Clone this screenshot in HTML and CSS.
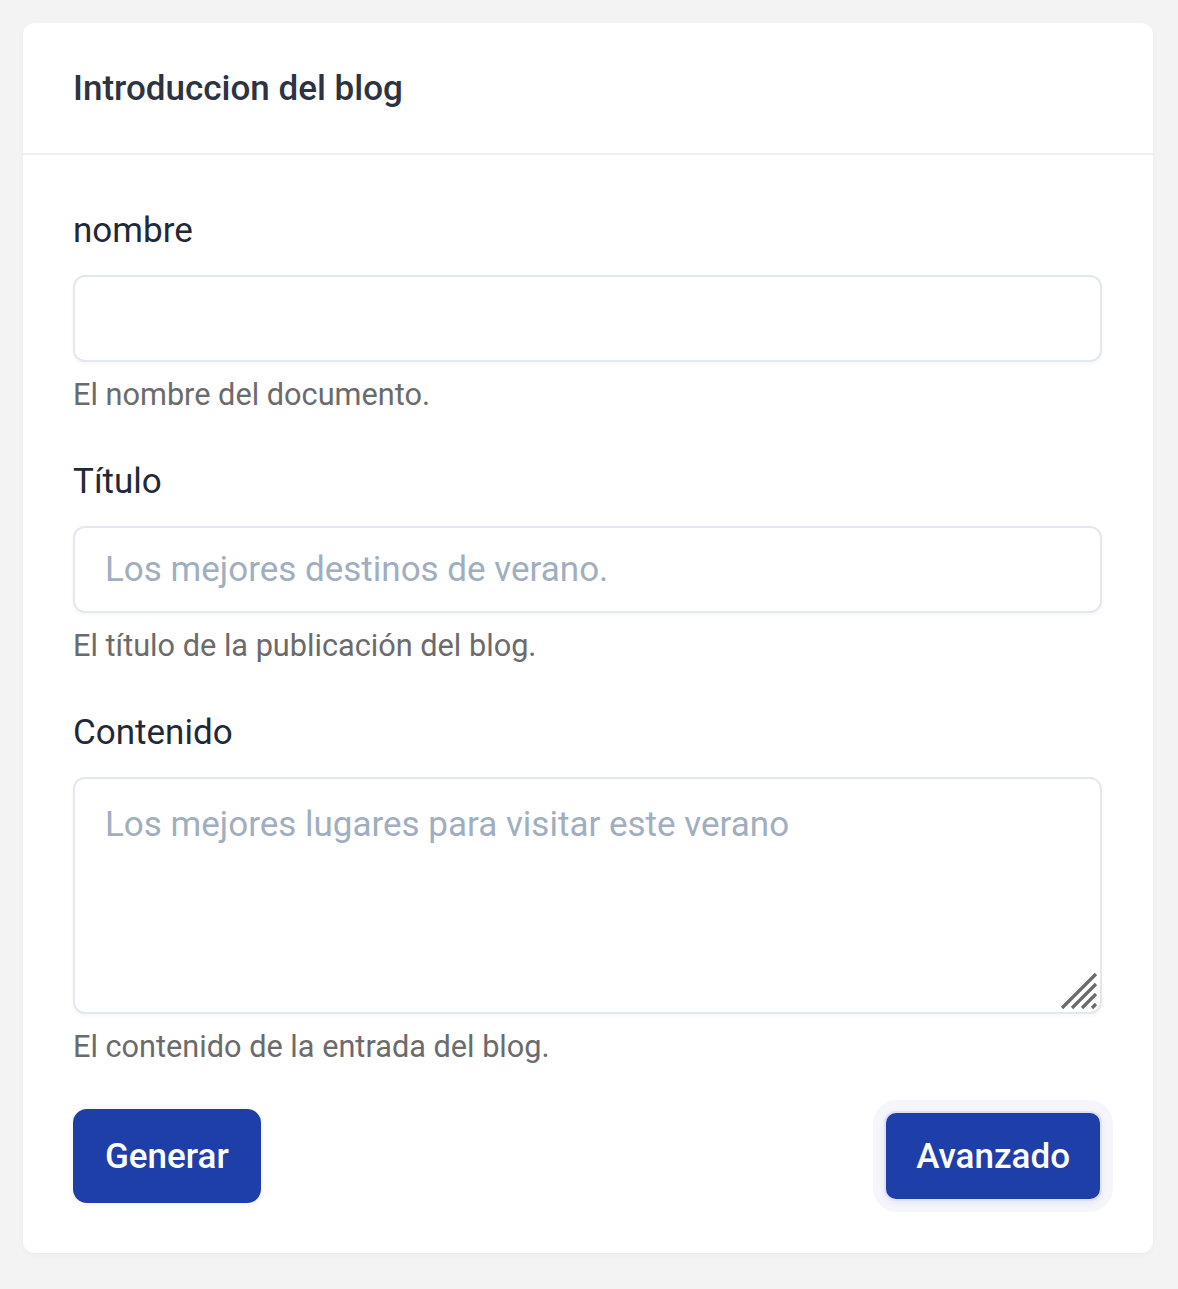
FILE: index.html
```html
<!DOCTYPE html>
<html lang="es">
<head>
<meta charset="utf-8">
<title>Introduccion del blog</title>
<link rel="stylesheet" href="styles.css">
</head>
<body>
<div class="page">
  <section class="card">
    <header class="card-header">
      <h1 class="card-title">Introduccion del blog</h1>
    </header>
    <form class="card-body">
      <div class="field">
        <label class="label" for="nombre">nombre</label>
        <input class="input" id="nombre" type="text">
        <p class="help">El nombre del documento.</p>
      </div>
      <div class="field">
        <label class="label" for="titulo">Título</label>
        <input class="input" id="titulo" type="text" placeholder="Los mejores destinos de verano.">
        <p class="help">El título de la publicación del blog.</p>
      </div>
      <div class="field">
        <label class="label" for="contenido">Contenido</label>
        <div class="textarea-wrap">
          <textarea class="input textarea" id="contenido" placeholder="Los mejores lugares para visitar este verano"></textarea>
          <svg class="grip" width="38" height="38" viewBox="0 0 38 38" aria-hidden="true">
            <path d="M2 36 L36 2 M12 36 L36 12 M22 36 L36 22 M32 36 L36 32" stroke="#6b6b6b" stroke-width="3.2" fill="none"/>
          </svg>
        </div>
        <p class="help">El contenido de la entrada del blog.</p>
      </div>
      <div class="actions">
        <button type="button" class="btn">Generar</button>
        <span class="focus-ring"><button type="button" class="btn btn-focus">Avanzado</button></span>
      </div>
    </form>
  </section>
</div>
</body>
</html>
```

FILE: styles.css
```css
* { box-sizing: border-box; }
html, body { margin: 0; padding: 0; }
body {
  background: #f3f3f3;
  font-family: Roboto, "Liberation Sans", Arial, sans-serif;
  color: #1f2937;
}
.page {
  padding: 23px 25px 37px 23px;
}
.card {
  background: #ffffff;
  border-radius: 12px;
  box-shadow: 0 2px 6px rgba(0,0,0,0.03);
}
.card-header {
  padding: 0 50px;
  height: 132px;
  display: flex;
  align-items: center;
  border-bottom: 2px solid #efefef;
}
.card-title {
  margin: 0;
  font-size: 35px;
  font-weight: 500;
  color: #2d3340;
  letter-spacing: 0;
}
.card-body {
  padding: 54px 51px 41px 50px;
  display: flex;
  flex-direction: column;
}
.field {
  display: flex;
  flex-direction: column;
}
.label {
  font-size: 35px;
  line-height: 44px;
  color: #1f2937;
  margin-bottom: 22px;
}
.input {
  width: 100%;
  height: 87px;
  border: 2px solid #e2e8f0;
  border-radius: 12px;
  background: #fff;
  box-shadow: 0 2px 4px rgba(0,0,0,0.04);
  font-family: inherit;
  font-size: 35px;
  color: #1f2937;
  padding: 0 30px;
  outline: none;
}
.input::placeholder { color: #a0aec0; }
.textarea-wrap {
  position: relative;
}
.textarea {
  display: block;
  height: 237px;
  resize: none;
  padding: 22px 30px;
  line-height: 48px;
}
.grip {
  position: absolute;
  right: 4px;
  bottom: 4px;
}
.help {
  margin: 13px 0 0;
  font-size: 30.7px;
  line-height: 40px;
  color: #6b6b6b;
  height: 40px;
}
.field + .field { margin-top: 45px; }
.actions {
  margin-top: 33px;
  display: flex;
  justify-content: space-between;
  align-items: center;
}
.btn {
  background: #1e3ea8;
  color: #fff;
  border: none;
  border-radius: 14px;
  font-family: inherit;
  font-size: 35px;
  font-weight: 500;
  padding: 0 32px;
  height: 94px;
  cursor: pointer;
  box-shadow: 0 2px 6px rgba(0,0,0,0.06);
}
.focus-ring {
  display: inline-flex;
  padding: 11px;
  margin-right: -11px;
  border-radius: 24px;
  background: #f4f6fb;
}
.btn-focus {
  height: 90px;
  border: 2px solid #dde3f2;
  border-radius: 12px;
  padding: 0 30px;
}
```
